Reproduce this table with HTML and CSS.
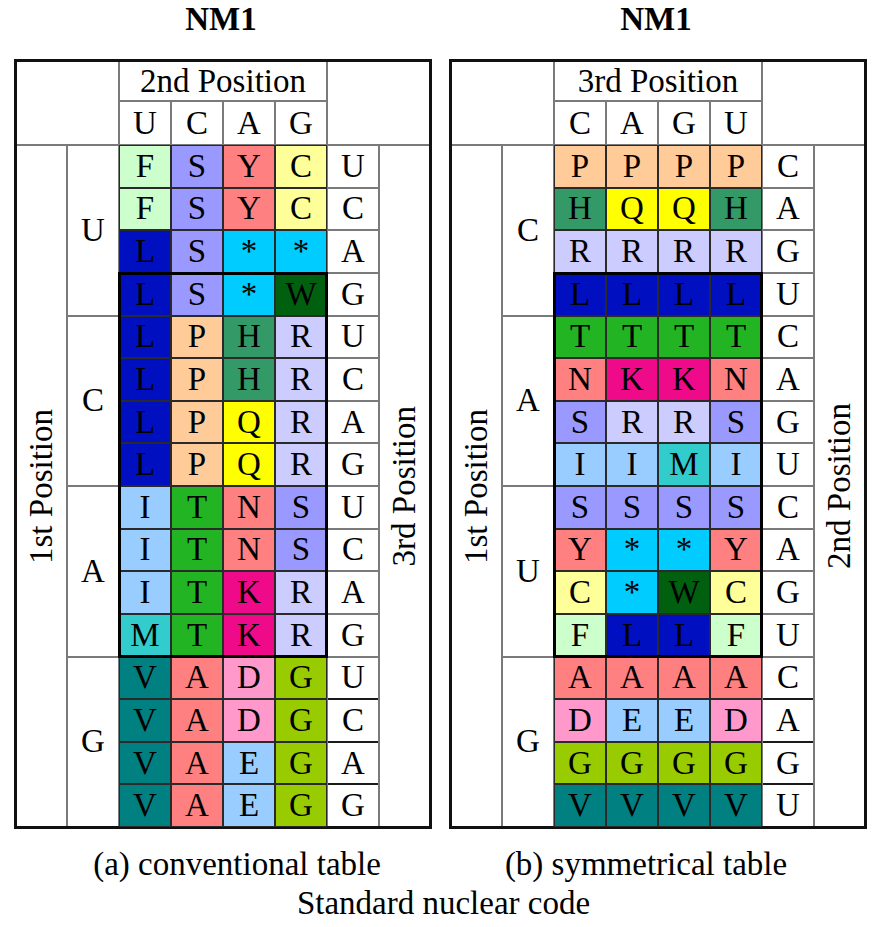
FILE: index.html
```html
<!DOCTYPE html>
<html lang="en">
<head>
<meta charset="utf-8">
<title>NM1 – Standard nuclear code</title>
<link rel="stylesheet" href="styles.css">
</head>
<body>
<div class="page">
  <div class="row titles">
    <div class="title">NM1</div>
    <div class="title">NM1</div>
  </div>
  <div class="row tables">
    <div class="tbl">
      <div class="hd corner-l"></div>
      <div class="hd pos">2nd Position</div>
      <div class="hd corner-r"></div>
      <div class="side first"><span class="vt">1st Position</span></div>
      <div class="side last"><span class="vt">3rd Position</span></div>
      <div class="grp g1">U</div>
      <div class="grp g2">C</div>
      <div class="grp g3">A</div>
      <div class="grp g4">G</div>
      <div class="box"></div>

      <span class="c n">U</span><span class="c n">C</span><span class="c n">A</span><span class="c n">G</span>

      <span class="c aF">F</span><span class="c aS">S</span><span class="c aY">Y</span><span class="c aC">C</span><span class="c n">U</span>
      <span class="c aF">F</span><span class="c aS">S</span><span class="c aY">Y</span><span class="c aC">C</span><span class="c n">C</span>
      <span class="c aL">L</span><span class="c aS">S</span><span class="c aX">*</span><span class="c aX">*</span><span class="c n">A</span>
      <span class="c aL">L</span><span class="c aS">S</span><span class="c aX">*</span><span class="c aW">W</span><span class="c n">G</span>

      <span class="c aL">L</span><span class="c aP">P</span><span class="c aH">H</span><span class="c aR">R</span><span class="c n">U</span>
      <span class="c aL">L</span><span class="c aP">P</span><span class="c aH">H</span><span class="c aR">R</span><span class="c n">C</span>
      <span class="c aL">L</span><span class="c aP">P</span><span class="c aQ">Q</span><span class="c aR">R</span><span class="c n">A</span>
      <span class="c aL">L</span><span class="c aP">P</span><span class="c aQ">Q</span><span class="c aR">R</span><span class="c n">G</span>

      <span class="c aI">I</span><span class="c aT">T</span><span class="c aN">N</span><span class="c aS">S</span><span class="c n">U</span>
      <span class="c aI">I</span><span class="c aT">T</span><span class="c aN">N</span><span class="c aS">S</span><span class="c n">C</span>
      <span class="c aI">I</span><span class="c aT">T</span><span class="c aK">K</span><span class="c aR">R</span><span class="c n">A</span>
      <span class="c aM">M</span><span class="c aT">T</span><span class="c aK">K</span><span class="c aR">R</span><span class="c n">G</span>

      <span class="c aV">V</span><span class="c aA">A</span><span class="c aD">D</span><span class="c aG">G</span><span class="c n dk">U</span>
      <span class="c aV">V</span><span class="c aA">A</span><span class="c aD">D</span><span class="c aG">G</span><span class="c n dk">C</span>
      <span class="c aV">V</span><span class="c aA">A</span><span class="c aE">E</span><span class="c aG">G</span><span class="c n dk">A</span>
      <span class="c aV">V</span><span class="c aA">A</span><span class="c aE">E</span><span class="c aG">G</span><span class="c n">G</span>
    </div>

    <div class="tbl">
      <div class="hd corner-l"></div>
      <div class="hd pos">3rd Position</div>
      <div class="hd corner-r"></div>
      <div class="side first"><span class="vt">1st Position</span></div>
      <div class="side last"><span class="vt">2nd Position</span></div>
      <div class="grp g1">C</div>
      <div class="grp g2">A</div>
      <div class="grp g3">U</div>
      <div class="grp g4">G</div>
      <div class="box"></div>

      <span class="c n">C</span><span class="c n">A</span><span class="c n">G</span><span class="c n">U</span>

      <span class="c aP">P</span><span class="c aP">P</span><span class="c aP">P</span><span class="c aP">P</span><span class="c n">C</span>
      <span class="c aH">H</span><span class="c aQ">Q</span><span class="c aQ">Q</span><span class="c aH">H</span><span class="c n">A</span>
      <span class="c aR">R</span><span class="c aR">R</span><span class="c aR">R</span><span class="c aR">R</span><span class="c n">G</span>
      <span class="c aL">L</span><span class="c aL">L</span><span class="c aL">L</span><span class="c aL">L</span><span class="c n">U</span>

      <span class="c aT">T</span><span class="c aT">T</span><span class="c aT">T</span><span class="c aT">T</span><span class="c n">C</span>
      <span class="c aN">N</span><span class="c aK">K</span><span class="c aK">K</span><span class="c aN">N</span><span class="c n">A</span>
      <span class="c aS">S</span><span class="c aR">R</span><span class="c aR">R</span><span class="c aS">S</span><span class="c n">G</span>
      <span class="c aI">I</span><span class="c aI">I</span><span class="c aM">M</span><span class="c aI">I</span><span class="c n">U</span>

      <span class="c aS">S</span><span class="c aS">S</span><span class="c aS">S</span><span class="c aS">S</span><span class="c n">C</span>
      <span class="c aY">Y</span><span class="c aX">*</span><span class="c aX">*</span><span class="c aY">Y</span><span class="c n">A</span>
      <span class="c aC">C</span><span class="c aX">*</span><span class="c aW">W</span><span class="c aC">C</span><span class="c n">G</span>
      <span class="c aF">F</span><span class="c aL">L</span><span class="c aL">L</span><span class="c aF">F</span><span class="c n">U</span>

      <span class="c aA">A</span><span class="c aA">A</span><span class="c aA">A</span><span class="c aA">A</span><span class="c n dk">C</span>
      <span class="c aD">D</span><span class="c aE">E</span><span class="c aE">E</span><span class="c aD">D</span><span class="c n dk">A</span>
      <span class="c aG">G</span><span class="c aG">G</span><span class="c aG">G</span><span class="c aG">G</span><span class="c n dk">G</span>
      <span class="c aV">V</span><span class="c aV">V</span><span class="c aV">V</span><span class="c aV">V</span><span class="c n">U</span>
    </div>
  </div>
  <div class="row captions">
    <div class="cap cap-a">(a) conventional table</div>
    <div class="cap cap-b">(b) symmetrical table</div>
  </div>
  <div class="subtitle">Standard nuclear code</div>
</div>
</body>
</html>
```

FILE: styles.css
```css
html, body {
  margin: 0;
  padding: 0;
  background: #ffffff;
}

body {
  font-family: "Liberation Serif", Tinos, "Times New Roman", Times, "Nimbus Roman", "Nimbus Roman No9 L", "DejaVu Serif", serif;
  color: #000;
}

.page {
  width: 881px;
}

.row {
  display: flex;
  padding-left: 14px;
  gap: 17px;
}

.title {
  width: 418px;
  text-align: center;
  font-weight: bold;
  font-size: 33px;
  line-height: 38px;
  padding-right: 4px;
  box-sizing: border-box;
}

.tables {
  margin-top: 21px;
}

.tbl {
  position: relative;
  display: grid;
  grid-template-columns: 49px repeat(6, 50px) 49px;
  grid-template-rows: 38px 42px repeat(16, 40.625px);
  gap: 2px;
  background: #7a7a7a;
  border: 3px solid #111;
  font-size: 33px;
}

.tbl > * {
  background: #fff;
  display: flex;
  align-items: center;
  justify-content: center;
}

.corner-l { grid-row: 1 / 3; grid-column: 1 / 3; }
.pos { grid-row: 1; grid-column: 3 / 7; }
.corner-r { grid-row: 1 / 3; grid-column: 7 / 9; }
.first { grid-row: 3 / 19; grid-column: 1; }
.last { grid-row: 3 / 19; grid-column: 8; }
.g1 { grid-row: 3 / 7; grid-column: 2; }
.g2 { grid-row: 7 / 11; grid-column: 2; }
.g3 { grid-row: 11 / 15; grid-column: 2; }
.g4 { grid-row: 15 / 19; grid-column: 2; }

.vt {
  writing-mode: vertical-rl;
  transform: rotate(180deg);
  white-space: nowrap;
}

.box {
  position: absolute;
  grid-row: 6 / 15;
  grid-column: 3 / 7;
  top: -2px;
  left: -2px;
  right: -2px;
  bottom: -2px;
  border: 3px solid #000;
  background: transparent;
  z-index: 2;
}

.c[class*=" a"] {
  box-shadow: 0 0 0 1px #2a2a2a;
}

.dk {
  box-shadow: 0 2px 0 #1a1a1a;
}

.aF { background: #ccffcc; }
.aS { background: #9999ff; }
.aY { background: #ff8080; }
.aC { background: #ffff99; }
.aL { background: #0010c0; }
.aX { background: #00ccff; }
.aW { background: #006010; }
.aP { background: #ffcc99; }
.aH { background: #339966; }
.aR { background: #ccccff; }
.aQ { background: #ffff00; }
.aI { background: #99ccff; }
.aT { background: #22b422; }
.aN { background: #ff8080; }
.aK { background: #ee0a88; }
.aM { background: #33cccc; }
.aV { background: #008080; }
.aA { background: #ff8080; }
.aD { background: #ff99cc; }
.aE { background: #99ccff; }
.aG { background: #99cc00; }

.captions {
  margin-top: 16px;
}

.cap {
  width: 418px;
  box-sizing: border-box;
  text-align: center;
  font-size: 33px;
  line-height: 39px;
}

.cap-a { padding-left: 28px; }
.cap-b { padding-right: 24px; }

.subtitle {
  text-align: center;
  font-size: 33px;
  line-height: 39px;
  padding-left: 6px;
}
```
